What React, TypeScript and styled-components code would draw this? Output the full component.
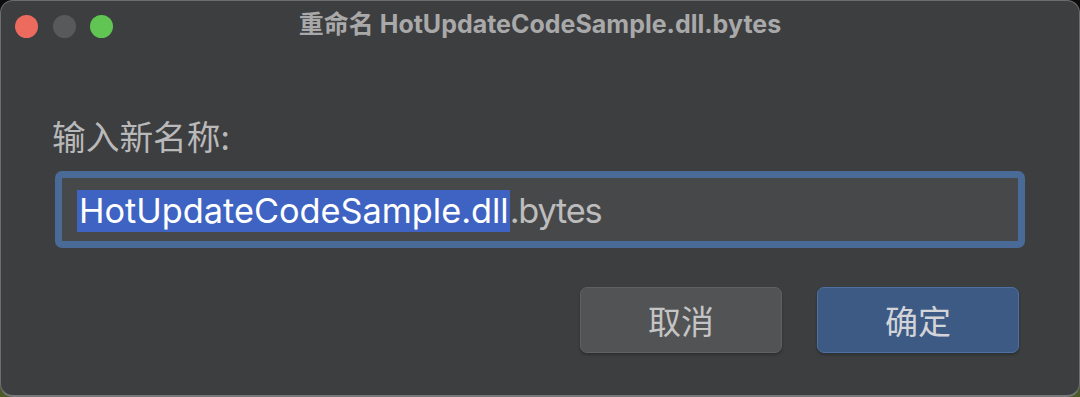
import React from "react";
import styled, { createGlobalStyle } from "styled-components";

const Global = createGlobalStyle`
  html, body { margin: 0; padding: 0; }
  body {
    width: 1080px;
    height: 397px;
    overflow: hidden;
    background: linear-gradient(180deg, #0c0c0c 0%, #1a1a1a 60%, #4d5b2a 100%);
    font-family: Inter, "Noto Sans CJK SC", sans-serif;
  }
`;

const Window = styled.div`
  box-sizing: border-box;
  width: 1080px;
  height: 397px;
  border-radius: 13px;
  border: 1px solid #6c6d6f;
  border-bottom: 2px solid #77787a;
  background: #3d3e40;
  display: flex;
  flex-direction: column;
  overflow: hidden;
`;

const TitleBar = styled.div`
  height: 51px;
  display: grid;
  grid-template-columns: 1fr auto 1fr;
  align-items: center;
  padding: 0 0 0 14px;
`;

const Lights = styled.div`
  display: flex;
  gap: 14.5px;
  align-items: center;
  margin-top: -1px;
`;

const Light = styled.span<{ $c: string }>`
  width: 23px;
  height: 23px;
  border-radius: 50%;
  background: ${(p) => p.$c};
`;

const Title = styled.div`
  font-family: Inter, "Noto Sans CJK SC", sans-serif;
  font-weight: 700;
  font-size: 25px;
  line-height: 30px;
  color: #a9a9aa;
  margin-top: -6px;
  margin-left: -14px;
  white-space: nowrap;
`;

const Content = styled.div`
  flex: 1;
  display: flex;
  flex-direction: column;
  padding: 63px 54px 0 54px;
`;

const Label = styled.div`
  font-family: "Noto Sans CJK SC", sans-serif;
  font-size: 33.7px;
  line-height: 42px;
  color: #b9b9ba;
  margin-left: -3px;
`;

const Field = styled.div`
  box-sizing: border-box;
  margin-top: 14px;
  height: 77px;
  border: 7px solid #4a6a98;
  border-radius: 7px;
  background: #47484a;
  display: flex;
  align-items: center;
  padding: 2px 0 0 15px;
  font-family: Inter, "Noto Sans CJK SC", sans-serif;
  font-size: 34.3px;
  white-space: nowrap;
`;

const Selected = styled.span`
  background: #3e63c3;
  color: #ffffff;
  line-height: 42px;
  display: inline-block;
  padding: 0 1px 0 2px;
`;

const Rest = styled.span`
  color: #bdbdbe;
  line-height: 42px;
  letter-spacing: -1.2px;
`;

const Buttons = styled.div`
  display: flex;
  justify-content: flex-end;
  gap: 35px;
  margin-top: 39px;
  padding-right: 6px;
`;

const Button = styled.button<{ $primary?: boolean }>`
  box-sizing: border-box;
  width: 202px;
  height: 66px;
  border-radius: 7px;
  border: 1.5px solid ${(p) => (p.$primary ? "#4f70a2" : "#5f6163")};
  background: ${(p) => (p.$primary ? "#3d5a85" : "#515355")};
  color: ${(p) => (p.$primary ? "#d2d4d8" : "#c4c4c4")};
  font-family: "Noto Sans CJK SC", sans-serif;
  font-size: 33px;
  box-shadow: 0 2px 3px rgba(0, 0, 0, 0.25);
  display: flex;
  align-items: center;
  justify-content: center;
  padding: 0;
`;

export default function App() {
  return (
    <>
      <Global />
      <Window>
        <TitleBar>
          <Lights>
            <Light $c="#ec6a5e" />
            <Light $c="#58595b" />
            <Light $c="#61c554" />
          </Lights>
          <Title>重命名 HotUpdateCodeSample.dll.bytes</Title>
          <div />
        </TitleBar>
        <Content>
          <Label>输入新名称:</Label>
          <Field>
            <Selected>HotUpdateCodeSample.dll</Selected>
            <Rest>.bytes</Rest>
          </Field>
          <Buttons>
            <Button>取消</Button>
            <Button $primary>确定</Button>
          </Buttons>
        </Content>
      </Window>
    </>
  );
}
